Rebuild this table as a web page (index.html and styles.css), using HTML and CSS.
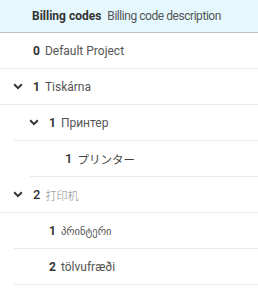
FILE: index.html
```html
<!DOCTYPE html>
<html>
<head>
<meta charset="utf-8">
<link rel="stylesheet" href="styles.css">
</head>
<body>
<div class="table">
  <div class="header">
    <span class="h-code">Billing codes</span>
    <span class="h-desc">Billing code description</span>
  </div>
  <div class="row lvl0">
    <span class="toggle"></span>
    <span class="code">0</span>
    <span class="desc">Default Project</span>
  </div>
  <div class="row lvl0">
    <span class="toggle"><svg width="10" height="7" viewBox="0 0 10 7"><path d="M1.2 1.3 L5 5.1 L8.8 1.3" fill="none" stroke="#333" stroke-width="2"/></svg></span>
    <span class="code">1</span>
    <span class="desc">Tiskárna</span>
  </div>
  <div class="row lvl1">
    <span class="toggle"><svg width="10" height="7" viewBox="0 0 10 7"><path d="M1.2 1.3 L5 5.1 L8.8 1.3" fill="none" stroke="#333" stroke-width="2"/></svg></span>
    <span class="code">1</span>
    <span class="desc">Принтер</span>
  </div>
  <div class="row lvl2">
    <span class="toggle"></span>
    <span class="code normal">1</span>
    <span class="desc jp">プリンター</span>
  </div>
  <div class="row lvl0">
    <span class="toggle"><svg width="10" height="7" viewBox="0 0 10 7"><path d="M1.2 1.3 L5 5.1 L8.8 1.3" fill="none" stroke="#333" stroke-width="2"/></svg></span>
    <span class="code normal">2</span>
    <span class="desc zh">打印机</span>
  </div>
  <div class="row lvl1">
    <span class="toggle"></span>
    <span class="code">1</span>
    <span class="desc ka">პრინტერი</span>
  </div>
  <div class="row lvl1">
    <span class="toggle"></span>
    <span class="code">2</span>
    <span class="desc">tölvufræði</span>
  </div>
</div>
</body>
</html>
```

FILE: styles.css
```css
html, body {
  margin: 0;
  padding: 0;
  background: #fff;
}
body {
  font-family: Roboto, "Noto Sans", "Noto Sans CJK JP", sans-serif;
  font-size: 12px;
  color: #555;
}
.table {
  display: flex;
  flex-direction: column;
}
.header {
  height: 32px;
  background: #e4f8fd;
  border-bottom: 1px solid #bdbdbd;
  display: flex;
  align-items: center;
  padding-left: 32px;
  gap: 6px;
}
.h-code {
  font-weight: bold;
  color: #333;
}
.h-desc {
  color: #555;
  letter-spacing: -0.45px;
}
.row {
  height: 35px;
  border-bottom: 1px solid #ebebeb;
  display: flex;
  align-items: center;
}
.lvl0 { padding-left: 13px; }
.lvl1 { margin-left: 14px; padding-left: 15px; }
.lvl2 { margin-left: 30px; padding-left: 15px; }
.toggle {
  width: 20px;
  display: flex;
  align-items: center;
}
.code {
  font-weight: bold;
  color: #333;
  margin-right: 5px;
}
.code.normal {
  font-weight: 500;
  font-size: 13px;
}
.desc {
  color: #555;
}
.jp {
  font-family: "Noto Sans CJK JP", sans-serif;
  font-size: 11.5px;
  color: #444;
}
.zh {
  font-family: "Noto Sans CJK SC", sans-serif;
  font-weight: 300;
  color: #888;
  font-size: 11px;
}
.ka {
  font-family: "DejaVu Sans", sans-serif;
  font-size: 10.5px;
}
```
